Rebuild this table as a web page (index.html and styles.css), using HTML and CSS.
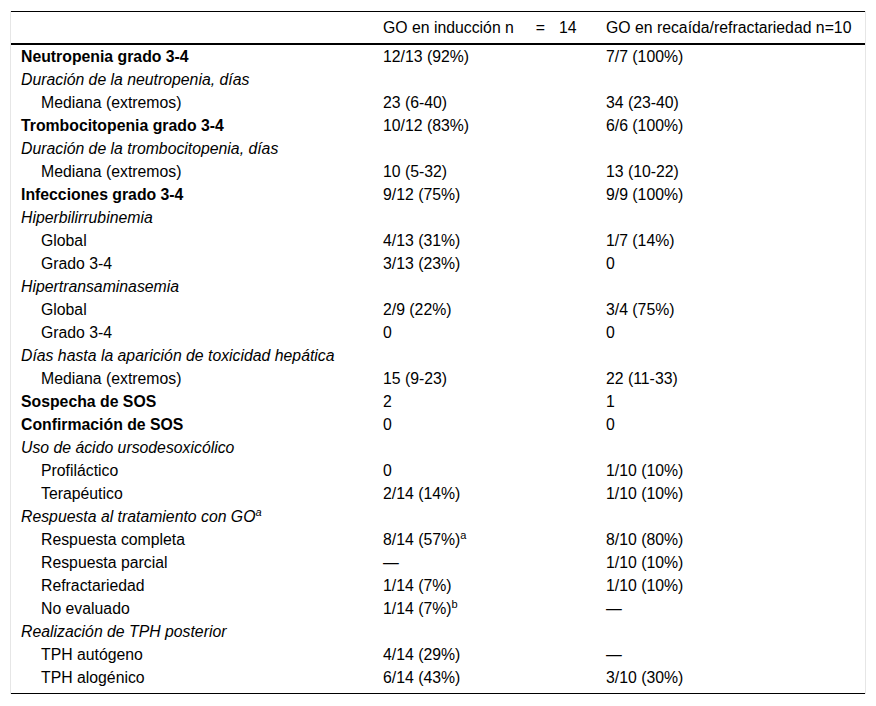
FILE: index.html
```html
<!DOCTYPE html>
<html lang="es">
<head>
<meta charset="utf-8">
<title>Tabla</title>
<link rel="stylesheet" href="styles.css">
</head>
<body>
<div class="wrap">
<table class="tbl">
<colgroup><col class="c1"><col class="c2"><col class="c3"></colgroup>
<thead>
<tr><th></th><th>GO en inducción n<span class="eq">=</span>14</th><th>GO en recaída/refractariedad n=10</th></tr>
</thead>
<tbody>
<tr><td class="b">Neutropenia grado 3-4</td><td>12/13 (92%)</td><td>7/7 (100%)</td></tr>
<tr><td class="i">Duración de la neutropenia, días</td><td></td><td></td></tr>
<tr><td class="s">Mediana (extremos)</td><td>23 (6-40)</td><td>34 (23-40)</td></tr>
<tr><td class="b">Trombocitopenia grado 3-4</td><td>10/12 (83%)</td><td>6/6 (100%)</td></tr>
<tr><td class="i">Duración de la trombocitopenia, días</td><td></td><td></td></tr>
<tr><td class="s">Mediana (extremos)</td><td>10 (5-32)</td><td>13 (10-22)</td></tr>
<tr><td class="b">Infecciones grado 3-4</td><td>9/12 (75%)</td><td>9/9 (100%)</td></tr>
<tr><td class="i">Hiperbilirrubinemia</td><td></td><td></td></tr>
<tr><td class="s">Global</td><td>4/13 (31%)</td><td>1/7 (14%)</td></tr>
<tr><td class="s">Grado 3-4</td><td>3/13 (23%)</td><td>0</td></tr>
<tr><td class="i">Hipertransaminasemia</td><td></td><td></td></tr>
<tr><td class="s">Global</td><td>2/9 (22%)</td><td>3/4 (75%)</td></tr>
<tr><td class="s">Grado 3-4</td><td>0</td><td>0</td></tr>
<tr><td class="i">Días hasta la aparición de toxicidad hepática</td><td></td><td></td></tr>
<tr><td class="s">Mediana (extremos)</td><td>15 (9-23)</td><td>22 (11-33)</td></tr>
<tr><td class="b">Sospecha de SOS</td><td>2</td><td>1</td></tr>
<tr><td class="b">Confirmación de SOS</td><td>0</td><td>0</td></tr>
<tr><td class="i">Uso de ácido ursodesoxicólico</td><td></td><td></td></tr>
<tr><td class="s">Profiláctico</td><td>0</td><td>1/10 (10%)</td></tr>
<tr><td class="s">Terapéutico</td><td>2/14 (14%)</td><td>1/10 (10%)</td></tr>
<tr><td class="i">Respuesta al tratamiento con GO<sup>a</sup></td><td></td><td></td></tr>
<tr><td class="s">Respuesta completa</td><td>8/14 (57%)<sup>a</sup></td><td>8/10 (80%)</td></tr>
<tr><td class="s">Respuesta parcial</td><td>—</td><td>1/10 (10%)</td></tr>
<tr><td class="s">Refractariedad</td><td>1/14 (7%)</td><td>1/10 (10%)</td></tr>
<tr><td class="s">No evaluado</td><td>1/14 (7%)<sup>b</sup></td><td>—</td></tr>
<tr><td class="i">Realización de TPH posterior</td><td></td><td></td></tr>
<tr><td class="s">TPH autógeno</td><td>4/14 (29%)</td><td>—</td></tr>
<tr class="last"><td class="s">TPH alogénico</td><td>6/14 (43%)</td><td>3/10 (30%)</td></tr>
</tbody>
</table>
</div>
</body>
</html>
```

FILE: styles.css
```css
html, body {
  margin: 0;
  padding: 0;
  background: #fff;
}
body {
  font-family: "Liberation Sans", Arial, sans-serif;
  font-size: 15.8px;
  color: #000;
}
.wrap {
  margin: 11px 10px 0 10px;
  border-left: 1px solid #e6e6e6;
  border-right: 1px solid #e6e6e6;
}
.tbl {
  width: 100%;
  border-collapse: collapse;
  table-layout: fixed;
  border-top: 1px solid #000;
  border-bottom: 1px solid #000;
}
.c1 { width: 362px; }
.c2 { width: 223px; }
.c3 { width: auto; }
.tbl th {
  font-weight: normal;
  text-align: left;
  height: 31px;
  line-height: 31px;
  padding: 0 0 0 10px;
  border-bottom: 2px solid #000;
  white-space: nowrap;
  vertical-align: middle;
}
.eq {
  padding: 0 14px 0 22px;
}
.tbl td {
  height: 23px;
  line-height: 23px;
  padding: 0 0 0 10px;
  white-space: nowrap;
  vertical-align: middle;
}
.tbl .last td {
  height: 27px;
  padding-bottom: 4px;
  box-sizing: border-box;
  vertical-align: top;
}
.b { font-weight: bold; }
.i { font-style: italic; }
.tbl td.s { padding-left: 30px; }
sup {
  font-size: 11px;
  line-height: 0;
  vertical-align: 6px;
}
```
